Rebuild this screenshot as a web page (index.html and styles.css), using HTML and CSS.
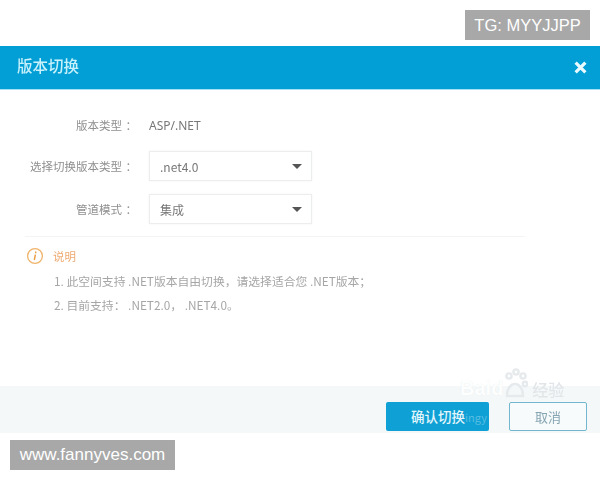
FILE: index.html
```html
<!DOCTYPE html>
<html lang="zh">
<head>
<meta charset="utf-8">
<title>版本切换</title>
<link rel="stylesheet" href="styles.css">
</head>
<body>
<div class="tag tag-top">TG: MYYJJPP</div>
<main class="dialog">
  <header class="head">
    <h1 class="title">版本切换</h1>
    <svg class="close" viewBox="0 0 12 12" width="13" height="13"><path d="M1.5 1.5 10.5 10.5M10.5 1.5 1.5 10.5" stroke="#eafaff" stroke-width="3" fill="none"/></svg>
  </header>
  <section class="body">
    <div class="form">
      <div class="row first">
        <span class="label">版本类型 ：</span>
        <span class="value">ASP/.NET</span>
      </div>
      <div class="row">
        <span class="label">选择切换版本类型 ：</span>
        <div class="select"><span>.net4.0</span><i class="caret"></i></div>
      </div>
      <div class="row">
        <span class="label">管道模式 ：</span>
        <div class="select"><span>集成</span><i class="caret"></i></div>
      </div>
    </div>
    <div class="note">
      <div class="note-head">
        <svg class="info" viewBox="0 0 18 18" width="18" height="18">
          <circle cx="9" cy="9" r="7.4" fill="none" stroke="#efb36a" stroke-width="1.3"/>
          <path d="M9.7 4.6v1.6M9.4 7.6 8.3 13" stroke="#eb9f45" stroke-width="1.5" fill="none"/>
        </svg>
        <span class="note-title">说明</span>
      </div>
      <p class="note-line">1. 此空间支持 .NET版本自由切换，请选择适合您 .NET版本；</p>
      <p class="note-line">2. 目前支持： .NET2.0， .NET4.0。</p>
    </div>
  </section>
  <footer class="foot">
    <button class="btn primary">确认切换<span class="ghost-text">ingy</span></button>
    <button class="btn cancel">取消</button>
  </footer>
</main>
<div class="baidu">
  <span class="baidu-word">Bai</span><span class="baidu-word du">d</span>
  <svg class="paw" viewBox="0 0 26 30" width="26" height="30">
    <g fill="none" stroke="#e6eaec" stroke-width="2.4">
      <circle cx="7" cy="8" r="2.6"/><circle cx="14" cy="4" r="2.6"/><circle cx="21" cy="8" r="2.6"/>
      <circle cx="23" cy="16" r="2.2"/><path d="M5 28c0-8 4-12 8-12s8 4 8 12z"/>
    </g>
  </svg>
  <span class="baidu-cn">经验</span>
</div>
<div class="tag tag-bottom">www.fannyves.com</div>
</body>
</html>
```

FILE: styles.css
```css
* { box-sizing: border-box; }
html, body { margin: 0; padding: 0; }
body {
  width: 600px;
  height: 480px;
  position: relative;
  overflow: hidden;
  background: #fff;
  font-family: "Noto Sans CJK SC", "Liberation Sans", sans-serif;
  color: #777;
}
.dialog { padding-top: 46px; display: flex; flex-direction: column; }
.head {
  height: 44px;
  background: #019fd6;
  border-bottom: 1px solid #a6e2f5;
  display: flex;
  align-items: center;
  justify-content: space-between;
  padding: 0 13px 6px 17px;
}
.title { margin: 0; font-size: 15.5px; font-weight: 500; color: #c8f1fb; line-height: 20px; filter: blur(.4px); }
.close { display: block; margin-top: 6px; }
.body { height: 296px; display: flex; flex-direction: column; }
.form { height: 147px; margin: 0 25px; padding-top: 23px; width: 500px; border-bottom: 1px solid #f3f4f4; }
.row { display: flex; align-items: center; height: 30px; margin-bottom: 13px; }
.row.first { height: 24px; margin-bottom: 14px; }
.label {
  width: 112px;
  text-align: right;
  white-space: nowrap;
  font-size: 11.5px;
  word-spacing: 1px;
  color: #8f8f8f;
  flex: none;
  filter: blur(.4px);
}
.value { margin-left: 12px; font-size: 12px; color: #777; font-family: "Noto Sans", sans-serif; filter: blur(.3px); }
.select {
  margin-left: 12px;
  width: 163px;
  height: 30px;
  border: 1px solid #eceeee;
  box-shadow: 0 0 2px #f2f2f2;
  display: flex;
  align-items: center;
  justify-content: space-between;
  padding: 0 9px 0 10px;
  font-size: 12px;
  color: #777;
  filter: blur(.3px);
}
.caret {
  width: 0;
  height: 0;
  border-left: 5px solid transparent;
  border-right: 5px solid transparent;
  border-top: 5px solid #555;
}
.note { padding: 9px 0 0 26px; }
.note-head { display: flex; align-items: center; height: 20px; gap: 9px; }
.info { display: block; flex: none; }
.note-title { font-size: 11.5px; color: #eeaa70; filter: blur(.4px); }
.note-line { margin: 5px 0 0 28px; font-size: 11.8px; line-height: 19px; color: #a6a6a6; white-space: nowrap; filter: blur(.4px); }
.foot {
  height: 47px;
  background: #f4f8f9;
  display: flex;
  align-items: center;
  padding: 13px 13px 0 386px;
  gap: 20px;
}
.btn {
  height: 29px;
  border-radius: 2px;
  font-family: inherit;
  padding: 0;
  white-space: nowrap;
}
.primary { width: 103px; background: #0fa0d5; border: 0; color: #e3f6fb; text-align: left; padding-left: 25px; font-size: 13.5px; font-weight: 500; }
.ghost-text { color: #58bde2; font-size: 11px; font-weight: 400; }
.cancel { width: 78px; background: #f7fbfc; border: 1.5px solid #72b6cf; color: #86a5b2; font-size: 13px; filter: blur(.3px); }
.baidu {
  position: absolute;
  left: 460px;
  top: 368px;
  width: 110px;
  height: 30px;
  display: flex;
  align-items: flex-end;
}
.paw { display: block; flex: none; margin-left: -1px; }
.baidu-word { font-family: "Liberation Sans", sans-serif; font-size: 20px; font-weight: 700; line-height: 20px; color: #fdfefe; text-shadow: 0 0 1px #e6eaec; }
.baidu-cn { font-size: 16px; color: #e2e6e8; margin-left: 4px; line-height: 18px; font-weight: 500; filter: blur(.4px); }
.tag {
  position: absolute;
  background: #a8a8a8;
  color: #fff;
  font-family: "Liberation Sans", sans-serif;
  display: flex;
  align-items: center;
  justify-content: center;
  white-space: nowrap;
  height: 30px;
}
.tag-top { left: 465px; top: 10px; width: 125px; font-size: 16.5px; }
.tag-bottom { left: 10px; top: 440px; width: 165px; font-size: 17px; }
```
